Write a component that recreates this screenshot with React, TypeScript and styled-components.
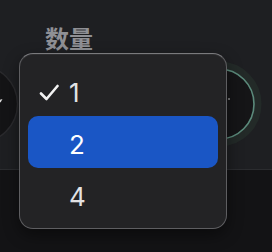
import React, { ReactElement } from 'react';
import styled, { createGlobalStyle } from 'styled-components';

const GlobalStyle = createGlobalStyle`
  html, body {
    margin: 0;
    padding: 0;
    background: #131315;
    width: 272px;
    height: 252px;
    overflow: hidden;
  }
  * {
    box-sizing: border-box;
  }
`;

const options = ['1', '2', '4'];

const LeftKnob = (): ReactElement => (
  <svg width="80" height="80" viewBox="0 0 80 80">
    <circle cx="40" cy="40" r="38.5" fill="#141416" stroke="#2a2a2d" strokeWidth="1.5" />
    <path d="M59 36.5 L63.5 35 L61.5 38.5 Z" fill="#d8d8d8" />
  </svg>
);

const RightKnob = (): ReactElement => (
  <svg width="86" height="86" viewBox="0 0 86 86">
    <circle cx="43" cy="43" r="38.5" fill="#151517" stroke="#232a28" strokeWidth="8" />
    <circle cx="43" cy="43" r="35" fill="none" stroke="#5b8a7b" strokeWidth="1.6" />
    <circle cx="53" cy="38" r="0.8" fill="#e8e8e8" />
  </svg>
);

const Check = (): ReactElement => (
  <SCheck width="20" height="17" viewBox="0 0 20 17">
    <path
      d="M2 9.5 L7.5 15 L18.5 2"
      fill="none"
      stroke="#f2f2f2"
      strokeWidth="2.6"
      strokeLinecap="round"
      strokeLinejoin="round"
    />
  </SCheck>
);

export default function App(): ReactElement {
  const selected = '1';
  const hovered = '2';

  return (
    <>
      <GlobalStyle />
      <SPage>
        <SPanel>
          <SLabel>数量</SLabel>
          <SKnobRow>
            <SLeftSlot>
              <LeftKnob />
            </SLeftSlot>
            <RightKnob />
          </SKnobRow>
        </SPanel>
        <SMenu>
          {options.map((value) => (
            <SOption key={value} active={value === hovered}>
              <SCheckSlot>{value === selected && <Check />}</SCheckSlot>
              <SOptionText active={value === hovered}>{value}</SOptionText>
            </SOption>
          ))}
        </SMenu>
      </SPage>
    </>
  );
}

const SPage = styled.div`
  position: relative;
  width: 272px;
  height: 252px;
  background: #131315;
`;

const SPanel = styled.div`
  height: 170px;
  background: #1e1f22;
  border-bottom: 1px solid #2b2c2f;
  display: flex;
  flex-direction: column;
  overflow: hidden;
`;

const SLabel = styled.div`
  margin: 25px 0 0 45px;
  font-family: 'Noto Sans CJK SC', 'Noto Sans', sans-serif;
  font-size: 24px;
  line-height: 26px;
  font-weight: 600;
  color: #8f9095;
`;

const SKnobRow = styled.div`
  display: flex;
  align-items: center;
  gap: 157px;
  margin-top: 10px;
`;

const SLeftSlot = styled.div`
  margin-left: -61px;
  display: flex;
`;

const SMenu = styled.div`
  position: absolute;
  left: 19px;
  top: 53px;
  width: 208px;
  height: 176px;
  padding: 10px 8px 8px;
  background: #232325;
  border: 1px solid #5e5e61;
  border-top-color: #7a7a7d;
  border-radius: 14px;
  box-shadow: 0 6px 16px rgba(0, 0, 0, 0.45), inset 0 1px 0 rgba(255, 255, 255, 0.06);
  display: flex;
  flex-direction: column;
`;

const SOption = styled.div<{ active: boolean }>`
  height: 52px;
  display: flex;
  align-items: center;
  gap: 10px;
  padding: 5px 0 0 11px;
  border-radius: 10px;
  background: ${({ active }) => (active ? '#1a56c5' : 'transparent')};
`;

const SCheckSlot = styled.div`
  width: 20px;
  height: 17px;
  display: flex;
`;

const SCheck = styled.svg`
  display: block;
`;

const SOptionText = styled.span<{ active: boolean }>`
  font-family: Inter, 'Liberation Sans', sans-serif;
  font-size: 26px;
  line-height: 30px;
  color: ${({ active }) => (active ? '#ffffff' : '#e2e2e4')};
`;
